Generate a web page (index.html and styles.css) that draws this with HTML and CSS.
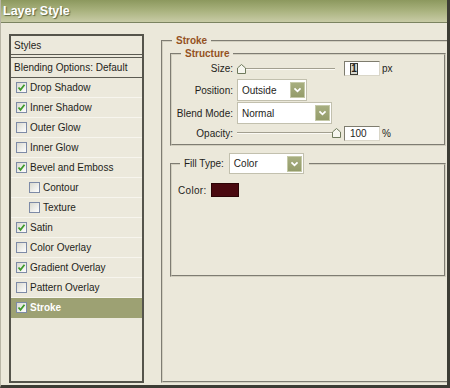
FILE: index.html
```html
<!DOCTYPE html>
<html lang="en">
<head>
    <meta charset="UTF-8">
    <meta name="viewport" content="width=device-width, initial-scale=1.0">
    <title>Layer Style</title>
    <link rel="stylesheet" href="styles.css">
</head>
<body>
    <div class="window">
        <div class="titlebar">Layer Style</div>
        <div class="content">
            <ul class="style-list">
                <li class="head">Styles</li>
                <li class="head blend">Blending Options: Default</li>
                <li class="item"><span class="check on"><svg viewBox="0 0 9 9"><polyline points="1.5,4.5 3.5,6.8 7.5,1.8"/></svg></span>Drop Shadow</li>
                <li class="item"><span class="check on"><svg viewBox="0 0 9 9"><polyline points="1.5,4.5 3.5,6.8 7.5,1.8"/></svg></span>Inner Shadow</li>
                <li class="item"><span class="check"></span>Outer Glow</li>
                <li class="item"><span class="check"></span>Inner Glow</li>
                <li class="item"><span class="check on"><svg viewBox="0 0 9 9"><polyline points="1.5,4.5 3.5,6.8 7.5,1.8"/></svg></span>Bevel and Emboss</li>
                <li class="item sub"><span class="check"></span>Contour</li>
                <li class="item sub"><span class="check"></span>Texture</li>
                <li class="item"><span class="check on"><svg viewBox="0 0 9 9"><polyline points="1.5,4.5 3.5,6.8 7.5,1.8"/></svg></span>Satin</li>
                <li class="item"><span class="check"></span>Color Overlay</li>
                <li class="item"><span class="check on"><svg viewBox="0 0 9 9"><polyline points="1.5,4.5 3.5,6.8 7.5,1.8"/></svg></span>Gradient Overlay</li>
                <li class="item"><span class="check"></span>Pattern Overlay</li>
                <li class="item selected"><span class="check on"><svg viewBox="0 0 9 9"><polyline points="1.5,4.5 3.5,6.8 7.5,1.8"/></svg></span>Stroke</li>
            </ul>

            <div class="options">
                <fieldset class="group stroke">
                    <legend>Stroke</legend>

                    <fieldset class="group structure">
                        <legend>Structure</legend>
                        <div class="row size">
                            <label>Size:</label>
                            <div class="slider"><span class="thumb start"><svg viewBox="0 0 9 10"><polygon points="0.5,4 4.5,0.5 8.5,4 8.5,9.5 0.5,9.5"/></svg></span></div>
                            <span class="field"><span class="caret">1</span></span>
                            <span class="unit">px</span>
                        </div>
                        <div class="row position">
                            <label>Position:</label>
                            <div class="select pos-select">
                                <span>Outside</span>
                                <span class="arrow"><svg viewBox="0 0 15 16"><polyline points="4,6 7.5,9.5 11,6"/></svg></span>
                            </div>
                        </div>
                        <div class="row blend-mode">
                            <label>Blend Mode:</label>
                            <div class="select mode-select">
                                <span>Normal</span>
                                <span class="arrow"><svg viewBox="0 0 15 16"><polyline points="4,6 7.5,9.5 11,6"/></svg></span>
                            </div>
                        </div>
                        <div class="row opacity">
                            <label>Opacity:</label>
                            <div class="slider"><span class="thumb end"><svg viewBox="0 0 9 10"><polygon points="0.5,4 4.5,0.5 8.5,4 8.5,9.5 0.5,9.5"/></svg></span></div>
                            <span class="field">100</span>
                            <span class="unit">%</span>
                        </div>
                    </fieldset>

                    <fieldset class="group fill">
                        <legend>
                            <span class="legend-row">
                                <span>Fill Type:</span>
                                <span class="select fill-select">
                                    <span>Color</span>
                                    <span class="arrow"><svg viewBox="0 0 15 16"><polyline points="4,6 7.5,9.5 11,6"/></svg></span>
                                </span>
                            </span>
                        </legend>
                        <div class="color-row">
                            <span>Color:</span>
                            <span class="swatch"></span>
                        </div>
                    </fieldset>
                </fieldset>
            </div>
        </div>
    </div>
</body>
</html>
```

FILE: styles.css
```css
body {
    margin: 0;
    font-family: "Liberation Sans", Arial, sans-serif;
    font-size: 10px;
    color: #1e1e1a;
    background-color: #ebe8da;
}
.window {
    width: 450px;
    height: 388px;
    box-sizing: border-box;
    border-left: 1px solid #b9b6a6;
    border-right: 3px solid #3c3c34;
    border-bottom: 3px solid #3c3c34;
    background-color: #ebe8da;
    overflow: hidden;
}
.titlebar {
    height: 22px;
    line-height: 22px;
    padding-left: 2px;
    border-bottom: 1px solid #7b8360;
    background: linear-gradient(#8c985e, #aab37f 50%, #c8cba6);
    color: #fff;
    font-size: 12.5px;
    font-weight: bold;
    text-shadow: 1px 1px 1px #5d6540;
}
.content {
    display: flex;
    height: 362px;
    box-sizing: border-box;
    padding: 11px 0 2px 8px;
}

/* left list */
.style-list {
    width: 135px;
    box-sizing: border-box;
    margin: 0;
    padding: 0;
    list-style: none;
    border: 2px solid #55544b;
    background-color: #ece9dc;
}
.style-list li {
    display: flex;
    align-items: center;
}
.head {
    height: 18px;
    padding-left: 3px;
    border-bottom: 1px solid #5c5b52;
}
.head.blend {
    height: 19px;
    margin-top: 2px;
    border-top: 1px solid #5c5b52;
}
.item {
    height: 19px;
    padding-left: 5px;
    border-bottom: 1px solid #f7f5ee;
}
.item.sub {
    padding-left: 18px;
}
.item.selected {
    background-color: #9da173;
    color: #fff;
    font-weight: bold;
    border-bottom-color: #9da173;
}
.check {
    width: 11px;
    height: 11px;
    box-sizing: border-box;
    margin-right: 3px;
    border: 1px solid #7d8aa6;
    background: linear-gradient(135deg, #d9d9d0, #ffffff);
    display: flex;
    align-items: center;
    justify-content: center;
}
.check svg {
    width: 9px;
    height: 9px;
}
.check polyline {
    fill: none;
    stroke: #3f9a2c;
    stroke-width: 1.8;
}

/* right options */
.options {
    flex: 1;
    margin-left: 17px;
    display: flex;
    flex-direction: column;
}
.group {
    margin: 0;
    min-width: 0;
    border: 2px groove #d2cfbf;
}
.group legend {
    padding: 0 4px;
    line-height: 13px;
    font-weight: bold;
    color: #94521f;
}
.stroke {
    flex: 1;
    margin-right: -12px;
    padding: 0 0 0 7px;
}
.stroke > legend {
    margin-left: 2px;
}
.structure {
    margin-right: 11px;
    padding: 0 0 3px 0;
}
.structure > legend {
    margin-left: 9px;
}
.row {
    display: flex;
    align-items: center;
}
.row label {
    width: 61px;
    margin-right: 4px;
    text-align: right;
}
.row.size {
    height: 17px;
}
.row.position {
    height: 22px;
    margin-top: 2px;
}
.row.blend-mode {
    height: 22px;
    margin-top: 1px;
}
.row.opacity {
    height: 16px;
    margin-top: 1px;
}
.slider {
    position: relative;
    width: 98px;
    height: 2px;
    margin-right: 9px;
    border-top: 1px solid #a29f8f;
    border-bottom: 1px solid #fbfaf4;
    box-sizing: border-box;
}
.thumb {
    position: absolute;
    top: -5px;
    width: 9px;
    height: 10px;
}
.thumb.start {
    left: 0;
}
.thumb.end {
    right: -6px;
}
.thumb svg {
    display: block;
    width: 9px;
    height: 10px;
}
.thumb polygon {
    fill: #f6f6ef;
    stroke: #6f7a5c;
    stroke-width: 1;
}
.field {
    width: 36px;
    height: 15px;
    box-sizing: border-box;
    padding-left: 5px;
    line-height: 13px;
    background-color: #fff;
    border: 1px solid #d9d6c8;
    border-top-color: #7e7c6e;
    border-left-color: #7e7c6e;
}
.caret {
    display: inline-block;
    width: 6px;
    height: 10px;
    line-height: 10px;
    margin-top: 1px;
    border: 1px solid #3a3a34;
    background-color: #d6d6cc;
    font-weight: bold;
    text-align: center;
}
.unit {
    margin-left: 2px;
}
.select {
    display: flex;
    align-items: center;
    justify-content: space-between;
    height: 22px;
    box-sizing: border-box;
    padding-left: 4px;
    background-color: #fff;
    border: 1px solid #c2c0ae;
    font-weight: normal;
    color: #1e1e1a;
}
.pos-select {
    width: 70px;
}
.mode-select {
    width: 95px;
}
.fill-select {
    width: 75px;
    height: 21px;
    margin-left: 5px;
}
.arrow {
    width: 15px;
    height: 16px;
    margin-right: 1px;
    box-sizing: border-box;
    background: linear-gradient(#a7ae80, #949c6a);
    border: 1px solid #c5c9a8;
}
.arrow svg {
    display: block;
    width: 13px;
    height: 14px;
}
.arrow polyline {
    fill: none;
    stroke: #fff;
    stroke-width: 2;
}
.fill {
    margin: 7px 11px 0 0;
    padding: 0 0 78px 6px;
}
.fill > legend {
    margin-left: 2px;
    padding: 0 5px 0 4px;
    line-height: normal;
}
.legend-row {
    display: flex;
    align-items: center;
    color: #1e1e1a;
    font-weight: normal;
}
.color-row {
    display: flex;
    align-items: center;
    height: 14px;
    margin-top: 9px;
    letter-spacing: 0.3px;
}
.swatch {
    width: 28px;
    height: 14px;
    box-sizing: border-box;
    margin-left: 5px;
    border: 1px solid #2c0406;
    background-color: #4a0910;
}
```
